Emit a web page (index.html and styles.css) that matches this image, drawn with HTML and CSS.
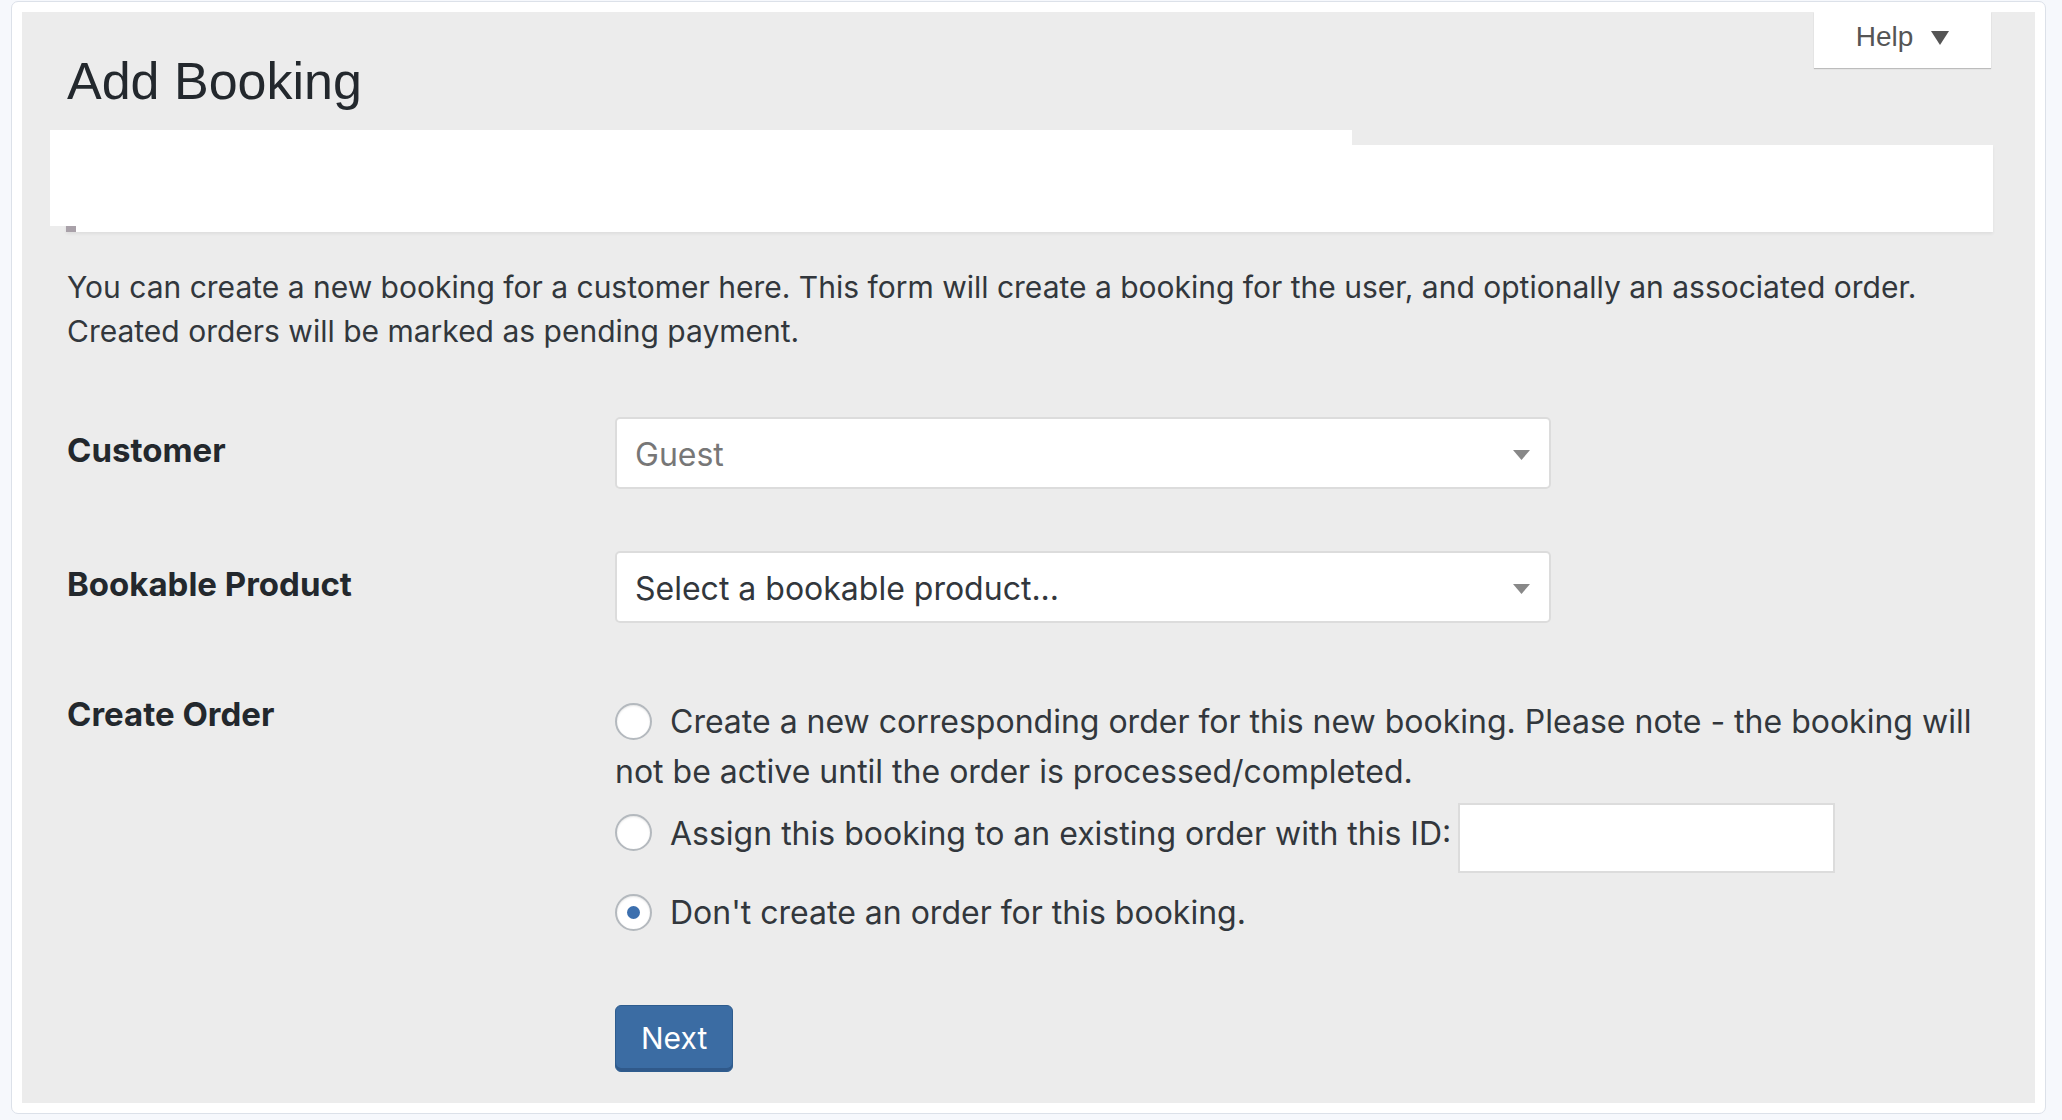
FILE: index.html
```html
<!DOCTYPE html>
<html lang="en">
<head>
    <meta charset="UTF-8">
    <title>Add Booking</title>
    <link rel="stylesheet" href="styles.css">
</head>
<body>

    <div class="card">
        <div class="wrap">
            <div class="page-header">
                <h1>Add Booking</h1>
                <div class="help-tab">
                    <span>Help</span>
                    <svg width="18" height="14" viewBox="0 0 18 14"><polygon points="0,0 18,0 9,14" fill="#555"/></svg>
                </div>
            </div>

            <div class="notice"></div>

            <p class="intro">You can create a new booking for a customer here. This form will create a booking for the user, and optionally an associated order. Created orders will be marked as pending payment.</p>

            <form class="booking-form">
                <div class="form-row">
                    <label class="row-label">Customer</label>
                    <div class="select-box placeholder">
                        <span>Guest</span>
                        <svg width="17" height="10" viewBox="0 0 17 10"><polygon points="0,0 17,0 8.5,10" fill="#888"/></svg>
                    </div>
                </div>

                <div class="form-row row-product">
                    <label class="row-label">Bookable Product</label>
                    <div class="select-box">
                        <span>Select a bookable product...</span>
                        <svg width="17" height="10" viewBox="0 0 17 10"><polygon points="0,0 17,0 8.5,10" fill="#888"/></svg>
                    </div>
                </div>

                <div class="form-row row-order">
                    <label class="row-label">Create Order</label>
                    <div class="order-options">
                        <label class="option option-new"><input type="radio" name="create_order"> Create a new corresponding order for this new booking. Please note - the booking will not be active until the order is processed/completed.</label>
                        <label class="option option-existing"><input type="radio" name="create_order"> Assign this booking to an existing order with this ID: <input type="text" class="order-id"></label>
                        <label class="option option-none"><input type="radio" name="create_order" checked> Don't create an order for this booking.</label>

                        <button type="button" class="button-primary">Next</button>
                    </div>
                </div>
            </form>
        </div>
    </div>

</body>
</html>
```

FILE: styles.css
```css
* {
    box-sizing: border-box;
}

body {
    margin: 0;
    padding: 1px 0 0 11px;
    background-color: #f6f8fc;
    font-family: Inter, "Liberation Sans", Arial, sans-serif;
    color: #32373c;
}

.card {
    width: 2035px;
    height: 1113px;
    padding: 10px;
    background: #fff;
    border: 1px solid #dce1e9;
    border-radius: 7px;
}

.wrap {
    height: 100%;
    padding: 0 42px 0 45px;
    background-color: #ececec;
}

.page-header {
    display: flex;
    justify-content: space-between;
    align-items: flex-start;
}

.page-header h1 {
    margin: 36px 0 0;
    font-family: "Liberation Sans", Arial, sans-serif;
    font-size: 52px;
    line-height: 1.3;
    font-weight: 400;
    color: #23282d;
}

.help-tab {
    width: 177px;
    height: 56px;
    margin-right: 2px;
    padding-bottom: 6px;
    display: flex;
    justify-content: center;
    align-items: center;
    gap: 18px;
    background: #fff;
    box-shadow: 0 1px 1px rgba(0, 0, 0, 0.2);
    font-family: "Liberation Sans", Arial, sans-serif;
    font-size: 28px;
    color: #555;
}

.help-tab svg {
    margin-top: 2px;
}

.notice {
    position: relative;
    height: 87px;
    margin: 29px 0 0 -1px;
    background: #fff;
    box-shadow: 0 2px 3px rgba(0, 0, 0, 0.06);
}

.notice::before {
    content: "";
    position: absolute;
    left: -16px;
    top: -15px;
    width: 1302px;
    height: 96px;
    background: #fff;
}

.notice::after {
    content: "";
    position: absolute;
    left: 0;
    bottom: 0;
    width: 10px;
    height: 6px;
    background: #a9a1a9;
}

.intro {
    margin: 33px 0 0;
    font-size: 30px;
    line-height: 44px;
}

.booking-form {
    margin-top: 64px;
}

.form-row {
    display: grid;
    grid-template-columns: 548px 936px;
}

.row-product {
    margin-top: 62px;
}

.row-order {
    margin-top: 76px;
    grid-template-columns: 548px 1fr;
}

.row-label {
    margin-top: 12px;
    font-size: 33px;
    line-height: 1.3;
    font-weight: 700;
    color: #23282d;
}

.row-order .row-label {
    margin-top: -6px;
}

.select-box {
    height: 72px;
    padding: 4px 19px 0 18px;
    display: flex;
    justify-content: space-between;
    align-items: center;
    background: #fff;
    border: 2px solid #dcdcdc;
    border-radius: 5px;
    font-size: 32px;
    color: #32373c;
}

.select-box.placeholder {
    color: #777;
}

.order-options {
    font-size: 32px;
    line-height: 50px;
}

.option {
    display: block;
}

.option-new {
    margin-top: -2px;
}

.option input[type="radio"] {
    appearance: none;
    -webkit-appearance: none;
    width: 37px;
    height: 37px;
    margin: 0 9px 0 0;
    vertical-align: -7px;
    background: #fff;
    border: 2px solid #b4b9be;
    border-radius: 50%;
    box-shadow: inset 0 1px 2px rgba(0, 0, 0, 0.1);
    position: relative;
}

.option input[type="radio"]:checked::before {
    content: "";
    position: absolute;
    left: 10px;
    top: 10px;
    width: 13px;
    height: 13px;
    border-radius: 50%;
    background: #3c6fae;
}

.option-existing {
    margin-top: 2px;
}

.order-id {
    width: 377px;
    height: 70px;
    margin: 4px 0 0 -2px;
    vertical-align: middle;
    background: #fff;
    border: 2px solid #dcdcdc;
    border-radius: 0;
    font-size: 28px;
}

.option-none {
    margin-top: 15px;
}

.button-primary {
    height: 67px;
    margin-top: 67px;
    padding: 0 25px;
    background: #3b6ca3;
    border: 1px solid #2e5c8e;
    border-radius: 6px;
    box-shadow: inset 0 -3px 0 #30598a;
    font-family: Inter, "Liberation Sans", Arial, sans-serif;
    font-size: 30px;
    color: #fff;
}
```
